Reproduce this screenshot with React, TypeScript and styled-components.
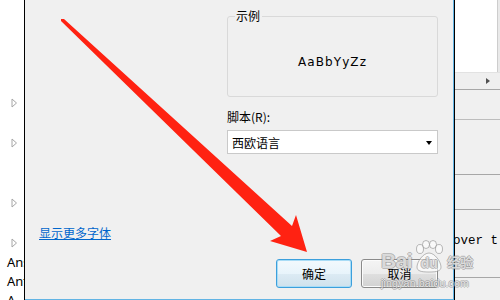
import React from "react"
import styled, { createGlobalStyle } from "styled-components"

const GlobalStyle = createGlobalStyle`
  html, body {
    margin: 0;
    padding: 0;
    background: #fff;
    overflow: hidden;
  }
  body {
    font-family: "Noto Sans CJK SC", "Noto Sans", sans-serif;
  }
`

const Screen = styled.div`
  position: relative;
  width: 500px;
  height: 300px;
  display: flex;
  overflow: hidden;
  background: #fff;
`

/* tree view peeking out on the left */
const TreeStrip = styled.div`
  width: 24px;
  flex: none;
  padding-top: 93px;
  display: flex;
  flex-direction: column;
  overflow: hidden;
  background: #fff;
`

const TreeRow = styled.div<{ h?: number }>`
  height: ${({ h }) => h ?? 20}px;
  flex: none;
  display: flex;
  align-items: center;
  padding-left: 11px;
`

const TreeLabel = styled.div<{ h?: number }>`
  height: ${({ h }) => h ?? 19}px;
  flex: none;
  padding-left: 7px;
  font-family: "Noto Sans", "Liberation Sans", sans-serif;
  font-size: 13px;
  line-height: ${({ h }) => h ?? 19}px;
  color: #000;
  white-space: nowrap;
`

const Expander = () => (
  <svg width="7" height="10" viewBox="0 0 7 10">
    <polygon points="1,1 5.5,5 1,9" fill="#fff" stroke="#a6a6a6" strokeWidth="1" />
  </svg>
)

/* the font dialog */
const Dialog = styled.div`
  width: 431px;
  height: 300px;
  flex: none;
  box-sizing: border-box;
  border-left: 1px solid #000;
  border-right: 1px solid #000;
  display: flex;
`

const DialogBody = styled.div`
  flex: 1;
  height: 300px;
  box-sizing: border-box;
  background: #f0f0f0;
  border-right: 1px solid #62b4e4;
  border-bottom: 1px solid #62b4e4;
  padding: 0 15px 11px 0;
  display: flex;
  flex-direction: column;
`

const RightColumn = styled.div`
  margin-left: 202px;
  width: 211px;
  display: flex;
  flex-direction: column;
`

const SampleGroup = styled.fieldset`
  margin: 8px 0 0;
  padding: 0;
  height: 89px;
  box-sizing: border-box;
  border: 1px solid #d9d9d9;
  border-radius: 3px;
  min-width: 0;
`

const GroupLegend = styled.legend`
  margin-left: 7px;
  padding: 0 2px 0 1px;
  font-size: 12px;
  line-height: 16px;
  color: #000;
`

const SampleText = styled.div`
  height: 72px;
  box-sizing: border-box;
  padding-top: 4px;
  display: flex;
  align-items: center;
  justify-content: center;
  font-family: "DejaVu Sans", "Liberation Sans", sans-serif;
  font-size: 12px;
  letter-spacing: 1.1px;
  color: #000;
`

const FieldLabel = styled.div`
  margin-top: 12px;
  font-size: 12px;
  line-height: 16px;
  color: #000;
`

const Select = styled.div`
  margin-top: 5px;
  height: 24px;
  box-sizing: border-box;
  border: 1px solid #c9c9c9;
  background: #fff;
  display: flex;
  align-items: center;
  justify-content: space-between;
  padding: 0 5px 0 4px;
  font-size: 12px;
  color: #000;
`

const DropArrow = styled.span`
  width: 0;
  height: 0;
  border-left: 3.5px solid transparent;
  border-right: 3.5px solid transparent;
  border-top: 4px solid #000;
  margin-top: 1px;
`

const Spacer = styled.div`
  flex: 1;
`

const MoreFonts = styled.a`
  margin-left: 14px;
  align-self: flex-start;
  font-size: 12px;
  line-height: 16px;
  color: #0066cc;
  text-decoration: underline;
  cursor: pointer;
`

const ButtonRow = styled.div`
  margin-top: 18px;
  display: flex;
  justify-content: flex-end;
  gap: 9px;
`

const Button = styled.button<{ primary?: boolean; w: number }>`
  width: ${({ w }) => w}px;
  height: 29px;
  box-sizing: border-box;
  padding: 0;
  border-radius: 3px;
  border: 1px solid ${({ primary }) => (primary ? "#3c9fdc" : "#8a8a8a")};
  box-shadow: inset 0 0 0 1px ${({ primary }) => (primary ? "#a8dcf6" : "#fbfbfb")};
  background: ${({ primary }) =>
    primary
      ? "linear-gradient(#f2f9fd 0%, #e8f4fb 50%, #dcebf4 51%, #cfe1ec 100%)"
      : "linear-gradient(#f4f4f4 0%, #ececec 50%, #dfdfdf 51%, #d2d2d2 100%)"};
  font-family: "Noto Sans CJK SC", sans-serif;
  font-size: 12px;
  color: #000;
`

/* window behind the dialog on the right */
const BackWindow = styled.div`
  width: 45px;
  flex: none;
  display: flex;
  flex-direction: column;
  background: #f0f0f0;
  overflow: hidden;
`

const ListPane = styled.div`
  height: 72px;
  flex: none;
  display: flex;
`

const ListArea = styled.div`
  flex: 1;
  background: #fff;
`

const VScroll = styled.div`
  width: 2px;
  background: #e9e9e9;
  border-left: 1px solid #cdcdcd;
`

const HScroll = styled.div`
  height: 17px;
  flex: none;
  box-sizing: border-box;
  background: #efefef;
  border-top: 1px solid #e2e2e2;
  display: flex;
  align-items: center;
  padding-left: 31px;
`

const ScrollArrow = styled.span`
  width: 0;
  height: 0;
  border-top: 3.5px solid transparent;
  border-bottom: 3.5px solid transparent;
  border-left: 4px solid #505050;
`

const Section = styled.div<{ h: number; light?: boolean }>`
  height: ${({ h }) => h}px;
  flex: none;
  border-top: 1px solid ${({ light }) => (light ? "#bdbdbd" : "#a7a7a7")};
`

const CodeLine = styled.div`
  margin: 24px 0 0 -2px;
  font-family: "Liberation Mono", "DejaVu Sans Mono", monospace;
  font-size: 12.5px;
  line-height: 14px;
  color: #000;
  white-space: nowrap;
`

/* overlays */
const ArrowLayer = styled.svg`
  position: absolute;
  left: 0;
  top: 0;
  pointer-events: none;
`

const Watermark = styled.div`
  position: absolute;
  left: 381px;
  top: 240px;
  pointer-events: none;
  display: flex;
  flex-direction: column;
  color: rgba(255, 255, 255, 0.7);
  text-shadow: 1px 0 rgba(120, 120, 120, 0.45), -1px 0 rgba(120, 120, 120, 0.45),
    0 1px rgba(120, 120, 120, 0.45), 0 -1px rgba(120, 120, 120, 0.45);
`

const WmRow = styled.div`
  display: flex;
  align-items: flex-end;
  height: 33px;
`

const WmBai = styled.span`
  font-family: "Liberation Sans", sans-serif;
  font-weight: bold;
  font-size: 21px;
  line-height: 22px;
  letter-spacing: -0.5px;
  margin-bottom: 1px;
`

const Paw = styled.span`
  position: relative;
  width: 32px;
  height: 33px;
  margin-left: 1px;
  display: flex;
  align-items: flex-end;
  justify-content: center;
  font-family: "Liberation Sans", sans-serif;
  font-weight: bold;
  font-size: 14px;
  line-height: 16px;
  padding-bottom: 2px;
  box-sizing: border-box;
`

const PawShape = styled.svg`
  position: absolute;
  left: 0;
  top: 0;
`

const PawText = styled.span`
  position: relative;
`

const WmCn = styled.span`
  margin-left: 2px;
  font-family: "Noto Sans CJK SC", sans-serif;
  font-weight: bold;
  font-size: 13px;
  line-height: 16px;
  margin-bottom: 3px;
`

const WmUrl = styled.span`
  margin-top: 4px;
  font-family: "Liberation Sans", sans-serif;
  font-size: 10.5px;
  line-height: 12px;
  letter-spacing: 0.2px;
`

const treeRows: (string | null)[] = ["x", null, "x", null, null, "x", null, "x"]

export default function App() {
  return (
    <>
      <GlobalStyle />
      <Screen>
        <TreeStrip>
          {treeRows.map((r, i) => (
            <TreeRow key={i}>{r && <Expander />}</TreeRow>
          ))}
          <TreeLabel>Ans</TreeLabel>
          <TreeLabel>Ant</TreeLabel>
          <TreeLabel>A</TreeLabel>
        </TreeStrip>

        <Dialog>
          <DialogBody>
            <RightColumn>
              <SampleGroup>
                <GroupLegend>示例</GroupLegend>
                <SampleText>AaBbYyZz</SampleText>
              </SampleGroup>
              <FieldLabel>脚本(R):</FieldLabel>
              <Select>
                <span>西欧语言</span>
                <DropArrow />
              </Select>
            </RightColumn>
            <Spacer />
            <MoreFonts>显示更多字体</MoreFonts>
            <ButtonRow>
              <Button primary w={76}>确定</Button>
              <Button w={77}>取消</Button>
            </ButtonRow>
          </DialogBody>
        </Dialog>

        <BackWindow>
          <ListPane>
            <ListArea />
            <VScroll />
          </ListPane>
          <HScroll>
            <ScrollArrow />
          </HScroll>
          <Section h={29} />
          <Section h={54} light />
          <Section h={34} />
          <Section h={67}>
            <CodeLine>over t</CodeLine>
          </Section>
          <Section h={27} />
        </BackWindow>

        <ArrowLayer width="500" height="300" viewBox="0 0 500 300">
          <polygon
            points="61,19 64,19 292,226 296,215 307,252 270,241 281,236 61,21"
            fill="#ff2212"
          />
        </ArrowLayer>

        <Watermark>
          <WmRow>
            <WmBai>Bai</WmBai>
            <Paw>
              <PawShape width="32" height="33" viewBox="0 0 32 33">
                <g fill="rgba(255,255,255,0.6)" stroke="rgba(120,120,120,0.5)" strokeWidth="1">
                  <ellipse cx="7" cy="9" rx="3.5" ry="4.5" />
                  <ellipse cx="13" cy="4.5" rx="3.5" ry="4" />
                  <ellipse cx="20" cy="4.5" rx="3.5" ry="4" />
                  <ellipse cx="26" cy="9" rx="3.5" ry="4.5" />
                  <path d="M16 13 C10 13 4 22 4 27 C4 31 8 32 16 32 C24 32 28 31 28 27 C28 22 22 13 16 13 Z" />
                </g>
              </PawShape>
              <PawText>du</PawText>
            </Paw>
            <WmCn>经验</WmCn>
          </WmRow>
          <WmUrl>jingyan.baidu.com</WmUrl>
        </Watermark>
      </Screen>
    </>
  )
}
